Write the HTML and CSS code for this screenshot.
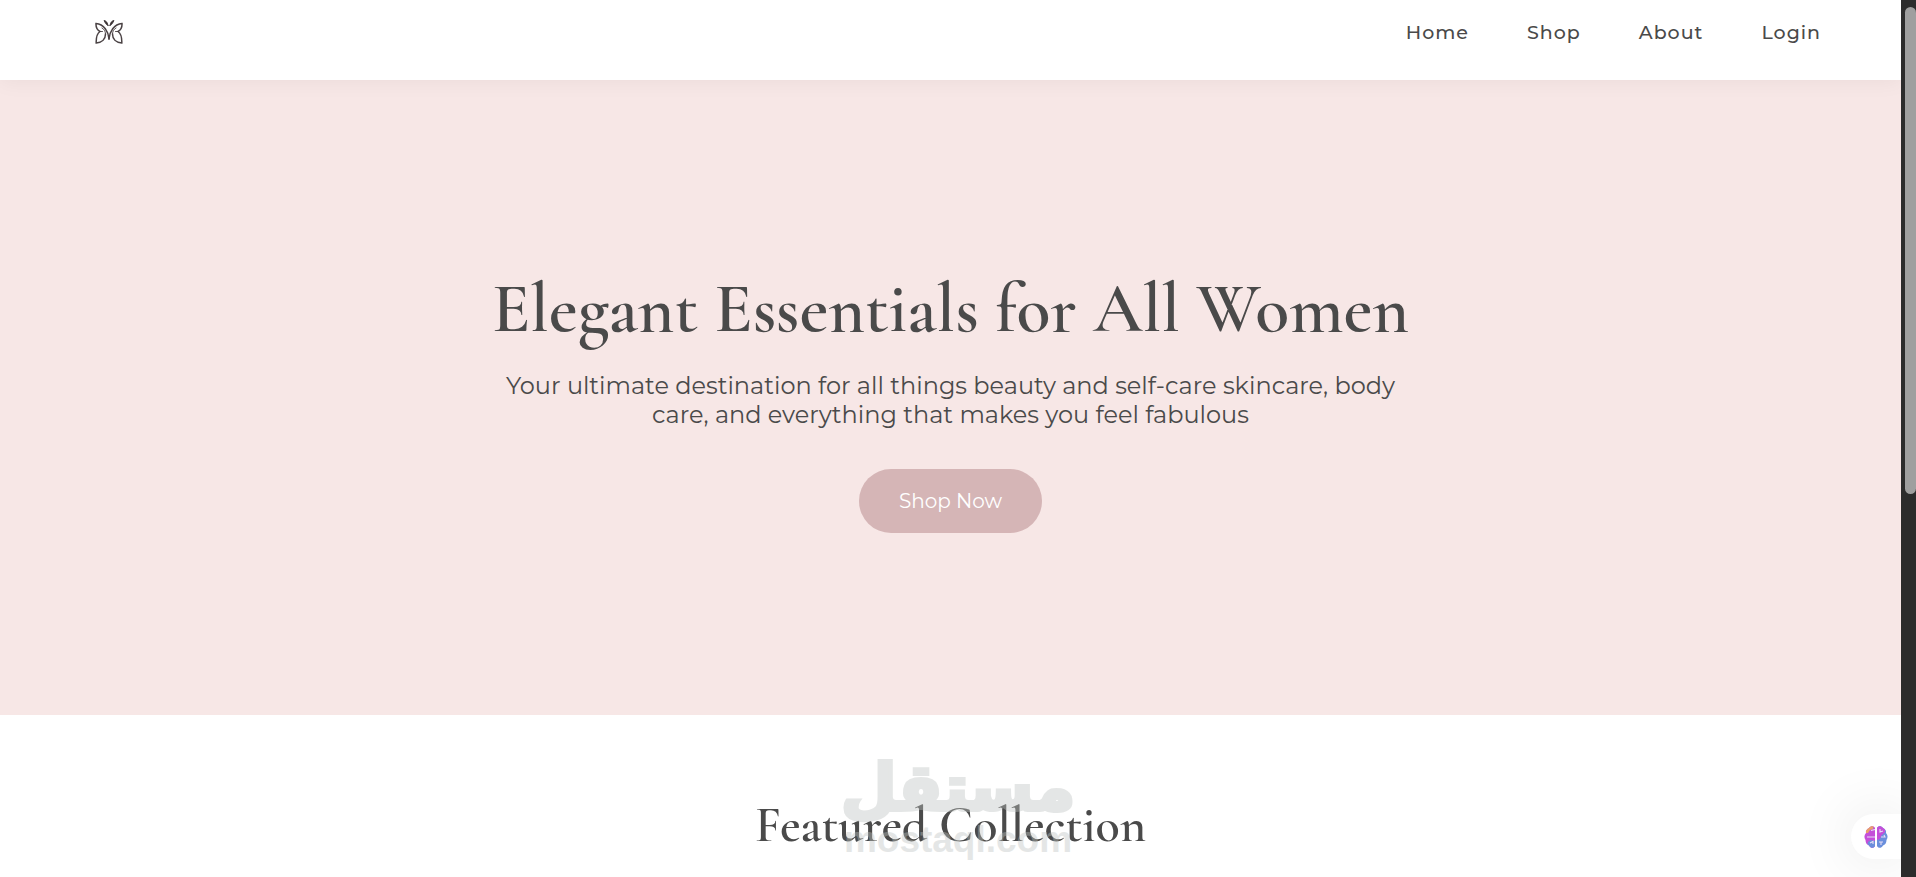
FILE: index.html
```
<!DOCTYPE html>
<html lang="en">
<head>
  <meta charset="UTF-8">
  <meta name="viewport" content="width=device-width, initial-scale=1.0">
  <title>Elegant Essentials</title>
  <link rel="stylesheet" href="styles.css">
</head>
<body>
  <div class="page">
    <header class="header">
      <a href="#" class="logo" aria-label="Home page">
        <svg width="28" height="26" viewBox="0 0 28 26" fill="none" stroke="#4a4244" stroke-linecap="round">
          <path stroke-width="1.5" d="M14 20C13.500 13 9 5 1 4.500C.8 8 2 11 5 12.500C2 14.500 1 18 1.200 24C7 23.500 10.500 20 10.500 15"/>
          <path stroke-width="1.5" d="M14 20C14.500 13 19 5 27 4.500C27.200 8 26 11 23 12.500C26 14.500 27 18 26.800 24C21 23.500 17.500 20 17.500 15"/>
          <path stroke-width="0.9" d="M5 12.500H7.500M23 12.500H20.500M10.500 15C10.500 12 9 10 7 9M17.500 15C17.500 12 19 10 21 9"/>
          <path stroke="#3a3234" stroke-width="0.8" fill="#3a3234" d="M13 6.500C12 6.500 10 4 9 1.500C11 1.500 13 4 13 6.500ZM15 6.500C16 6.500 18 4 19 1.500C17 1.500 15 4 15 6.500Z"/>
        </svg>
      </a>
      <nav class="nav">
        <a href="#">Home</a>
        <a href="#">Shop</a>
        <a href="#">About</a>
        <a href="#">Login</a>
      </nav>
    </header>

    <main>
      <section class="hero">
        <h1>Elegant Essentials for All Women</h1>
        <p>Your ultimate destination for all things beauty and self-care skincare, body care, and everything that makes you feel fabulous</p>
        <button type="button" class="btn">Shop Now</button>
      </section>

      <section class="featured">
        <h2>Featured Collection</h2>
      </section>
    </main>
  </div>

  <div class="scrollbar"><div class="thumb"></div></div>

  <div class="watermark">
    <span class="mark-ar" lang="ar" dir="rtl">مستقل</span>
    <span class="mark-en">mostaql.com</span>
  </div>

  <button type="button" class="assistant" aria-label="Assistant">
    <svg width="24" height="24" viewBox="0 0 24 24">
      <path fill="#c44fd9" d="M11 3C10 .5 6.500 .500 5 3C2.500 4 1.500 6 2 8C0 10 0 13 1.500 15C1.500 18 3 20 5 20.500C6.500 23.500 10 23.500 11 21Z"/>
      <path fill="#e8a06c" d="M9.500 1.500C7.500 .800 6 1.500 5 3C2.500 4 1.500 6 2 8L4 8L6 5L9 4Z"/>
      <path fill="#6a8fdc" d="M11 16L7 15L4 17L3.500 19L5 20.500C6.500 23.500 10 23.500 11 21Z"/>
      <path fill="#6a8fdc" d="M13 3C14 .5 17.500 .500 19 3C21.500 4 22.500 6 22 8C24 10 24 13 22.500 15C22.500 18 21 20 19 20.500C17.500 23.500 14 23.500 13 21Z"/>
      <path fill="#c44fd9" d="M13 3C14 .5 17.500 .500 19 3C21 4 21.500 5 21 7L17 11L16 14L13 15Z"/>
      <path fill="none" stroke="#e6dcf5" stroke-width="1.100" d="M11 4.500L7 5.500M3 12H11M6 18L9 16.500V19M16 4V7L19 6M17 12H21L20 10M15 17H19M17 17V20"/>
    </svg>
  </button>
</body>
</html>
```
FILE: styles.css
```
* {
  box-sizing: border-box;
  margin: 0;
  padding: 0;
}

body {
  display: flex;
  height: 100vh;
  overflow: hidden;
  font-family: "Montserrat", Inter, sans-serif;
  color: #4a4a4a;
  background: #fff;
}

.page {
  flex: 1;
  height: 100vh;
  overflow: hidden;
}

/* header */
.header {
  position: relative;
  z-index: 2;
  display: flex;
  justify-content: space-between;
  align-items: flex-start;
  height: 80px;
  padding: 19px 80px 0 95px;
  background: #fff;
  box-shadow: 0 2px 20px rgba(0, 0, 0, 0.05);
}

.logo {
  display: block;
}

.nav {
  display: flex;
  gap: 58px;
}

.nav a {
  font-size: 19px;
  line-height: 28px;
  font-weight: 500;
  letter-spacing: 1px;
  color: #4a4a4a;
  text-decoration: none;
}

/* hero */
.hero {
  display: flex;
  flex-direction: column;
  align-items: center;
  padding: 182px 24px;
  text-align: center;
  background: #f7e7e6;
}

h1,
h2 {
  font-family: "Cormorant Garamond", "Liberation Serif", serif;
  font-weight: 600;
}

.hero h1 {
  margin-bottom: 16px;
  font-size: 70px;
  line-height: 93px;
}

.hero p {
  max-width: 920px;
  margin-bottom: 40px;
  font-size: 24px;
  line-height: 29px;
}

.btn {
  height: 64px;
  padding: 0 40px;
  border: none;
  border-radius: 32px;
  font-family: inherit;
  font-size: 20px;
  color: #fff;
  background: #d5b5b6;
}

/* featured */
.featured {
  padding: 80px 24px;
  text-align: center;
}

.featured h2 {
  font-size: 50px;
  line-height: 60px;
}

/* scrollbar */
.scrollbar {
  width: 15px;
  padding: 7px 0 0 4px;
  background: #2c2c2c;
}

.thumb {
  height: 56%;
  border-radius: 6px;
  background: #9f9f9f;
}

/* watermark */
.watermark {
  position: absolute;
  left: 50%;
  bottom: 17px;
  display: flex;
  flex-direction: column;
  align-items: center;
  transform: translateX(-50%);
  color: #bec3c1;
  font-weight: 700;
  opacity: 0.4;
  pointer-events: none;
}

.mark-ar {
  font-family: "DejaVu Sans", sans-serif;
  font-size: 64px;
  line-height: 64px;
  -webkit-text-stroke: 4px #bec3c1;
}

.mark-en {
  font-family: "Liberation Sans", sans-serif;
  font-size: 37px;
  line-height: 40px;
}

/* assistant button */
.assistant {
  position: absolute;
  right: 15px;
  bottom: 18px;
  display: flex;
  align-items: center;
  width: 50px;
  height: 45px;
  padding-left: 13px;
  border: none;
  border-radius: 23px 0 0 23px;
  background: #fff;
  box-shadow: 0 0 60px rgba(0, 0, 0, 0.12);
  clip-path: inset(-70px 0 -70px -70px);
}
```
